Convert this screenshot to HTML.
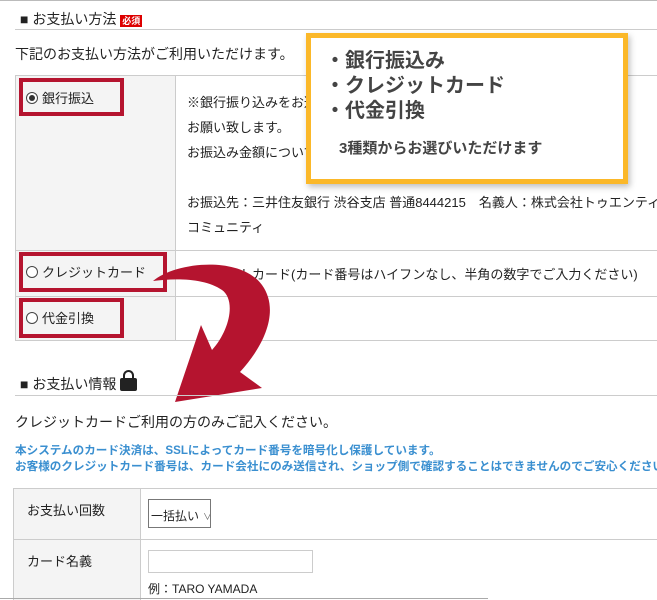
<!DOCTYPE html>
<html><head><meta charset="utf-8"><style>
body{margin:0;width:657px;height:600px;overflow:hidden;background:#fff;font-family:"Liberation Sans","Noto Sans CJK JP",sans-serif;color:#222;position:relative}
.a{position:absolute;white-space:nowrap}
.line{position:absolute;height:1px;background:#ccc}
.vl{position:absolute;width:1px;background:#ccc}
.f13{font-size:13px}
.rb{position:absolute;border:4px solid #b5142f;box-sizing:border-box}
.radio{display:inline-block;width:10px;height:10px;border:1px solid #444;border-radius:50%;vertical-align:-1px;margin-right:4px;position:relative;background:#fff}
.radio.on::after{content:"";position:absolute;left:2px;top:2px;width:6px;height:6px;border-radius:50%;background:#333}
</style></head><body>
<div class="line" style="left:0;top:0;width:657px;background:#bbb"></div>
<div class="a" style="left:20px;top:9px;font-size:14px">■ お支払い方法 <span style="background:#d00;color:#fff;font-size:9px;font-weight:bold;padding:1px 2px">必須</span></div>
<div class="line" style="left:15px;top:29px;width:642px"></div>
<div class="a" style="left:15px;top:44px;font-size:14px">下記のお支払い方法がご利用いただけます。</div>
<div style="position:absolute;left:15px;top:75px;width:160px;height:265px;background:#f4f4f4"></div>
<div class="line" style="left:15px;top:75px;width:642px"></div>
<div class="line" style="left:15px;top:250px;width:642px"></div>
<div class="line" style="left:15px;top:296px;width:642px"></div>
<div class="line" style="left:15px;top:340px;width:642px"></div>
<div class="vl" style="left:15px;top:75px;height:265px"></div>
<div class="vl" style="left:175px;top:75px;height:265px"></div>
<div class="a f13" style="left:26px;top:88px"><span class="radio on"></span>銀行振込</div>
<div class="a f13" style="left:26px;top:262px"><span class="radio"></span>クレジットカード</div>
<div class="a f13" style="left:26px;top:308px"><span class="radio"></span>代金引換</div>
<div class="a f13" style="left:187px;top:92px">※銀行振り込みをお選びいただいた場合、ご注文確定後7日以内でお振込み</div>
<div class="a f13" style="left:187px;top:117px">お願い致します。</div>
<div class="a f13" style="left:187px;top:142px">お振込み金額については、ご注文確定メールにてご確認ください。</div>
<div class="a f13" style="left:187px;top:192px">お振込先：三井住友銀行 渋谷支店 普通8444215　名義人：株式会社トゥエンティ</div>
<div class="a f13" style="left:187px;top:217px">コミュニティ</div>
<div class="a f13" style="left:187px;top:264px">クレジットカード(カード番号はハイフンなし、半角の数字でご入力ください)</div>
<div class="rb" style="left:19px;top:78px;width:105px;height:38px"></div>
<div class="rb" style="left:19px;top:252px;width:148px;height:40px"></div>
<div class="rb" style="left:19px;top:298px;width:105px;height:40px"></div>
<div style="position:absolute;left:306px;top:33px;width:322px;height:151px;box-sizing:border-box;border:5px solid #fbb829;background:#fff;box-shadow:2px 3px 6px rgba(0,0,0,.25)">
<div class="a" style="left:14px;top:11px;font-size:20px;font-weight:bold;color:#444;line-height:25px">・銀行振込み<br>・クレジットカード<br>・代金引換</div>
<div class="a" style="left:28px;top:99px;font-size:15px;font-weight:bold;color:#444">3種類からお選びいただけます</div>
</div>
<svg style="position:absolute;left:0;top:0" width="657" height="600"><path d="M153,281 C175,262 240,255 262,285 C280,310 265,345 240,372 L262,388 L175,402 L201,325 L212,350 C230,330 236,300 222,290 C205,278 175,278 153,281 Z" fill="#b5142f"/></svg>
<div class="a" style="left:20px;top:374px;font-size:14px">■ お支払い情報 <span style="display:inline-block;width:17px;height:13px;background:#222;border-radius:2px;vertical-align:-2px;position:relative"><span style="position:absolute;left:3px;top:-8px;width:7px;height:8px;border:2px solid #222;border-bottom:none;border-radius:6px 6px 0 0"></span></span></div>
<div class="line" style="left:15px;top:395px;width:642px"></div>
<div class="a" style="left:15px;top:412px;font-size:14px">クレジットカードご利用の方のみご記入ください。</div>
<div class="a" style="left:15px;top:442px;font-size:11.6px;font-weight:bold;color:#3a8fd0">本システムのカード決済は、SSLによってカード番号を暗号化し保護しています。</div>
<div class="a" style="left:15px;top:458px;font-size:11.6px;font-weight:bold;color:#3a8fd0">お客様のクレジットカード番号は、カード会社にのみ送信され、ショップ側で確認することはできませんのでご安心ください。</div>
<div style="position:absolute;left:13px;top:488px;width:127px;height:112px;background:#f4f4f4"></div>
<div class="line" style="left:13px;top:488px;width:644px"></div>
<div class="line" style="left:13px;top:539px;width:644px"></div>
<div class="vl" style="left:13px;top:488px;height:112px"></div>
<div class="vl" style="left:140px;top:488px;height:112px"></div>
<div class="a f13" style="left:27px;top:500px">お支払い回数</div>
<div class="a f13" style="left:27px;top:551px">カード名義</div>
<div style="position:absolute;left:148px;top:499px;width:63px;height:29px;box-sizing:border-box;border:1px solid #777;font-size:12px;white-space:nowrap;overflow:hidden;padding:7px 0 0 2px">一括払い<span style="font-size:9px;color:#666;margin-left:4px">∨</span></div>
<div style="position:absolute;left:148px;top:550px;width:165px;height:23px;box-sizing:border-box;border:1px solid #ccc"></div>
<div class="a" style="left:148px;top:580px;font-size:12px">例：TARO YAMADA</div>
<div class="line" style="left:0;top:598px;width:488px;background:#aaa"></div>
</body></html>
